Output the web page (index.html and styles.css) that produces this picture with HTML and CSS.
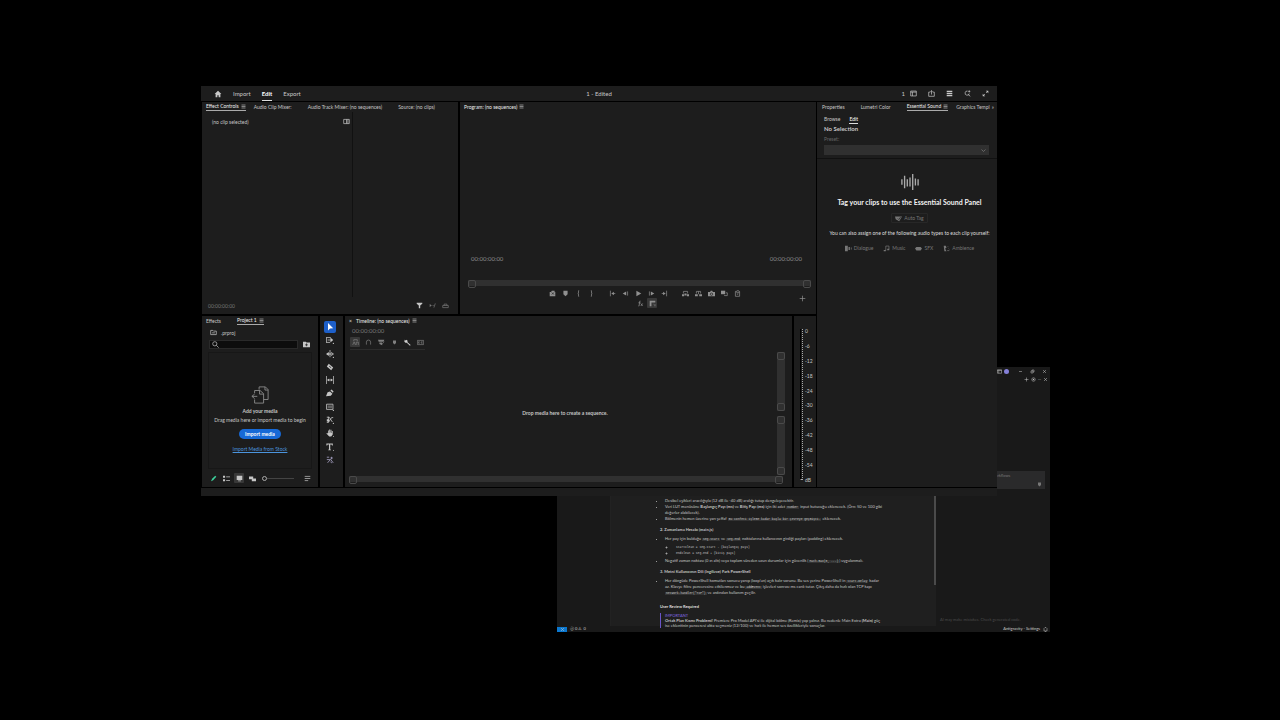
FILE: index.html
```html
<!DOCTYPE html>
<html lang="en">
<head>
  <meta charset="UTF-8">
  <title>1 - Edited</title>
  <link rel="stylesheet" href="styles.css">
</head>
<body>

  <!-- icon set, all on a 10x10 grid -->
  <svg class="sprite" aria-hidden="true">
    <symbol id="home" viewBox="0 0 10 10"><path d="M5 1L.8 5H2v4h2.200V6.500h1.600V9H8V5h1.200z"/></symbol>
    <symbol id="menu" viewBox="0 0 10 10"><path class="line" d="M1 2h8M1 5h8M1 8h8"/></symbol>
    <symbol id="workspace" viewBox="0 0 10 10"><path class="line" d="M1 1.500h8v7H1zM1 3h8M3.500 3v5.500"/></symbol>
    <symbol id="share" viewBox="0 0 10 10"><path class="line" d="M3 3H1v6h8V3H7M5 6.500V1M3.300 2.600L5 1l1.700 1.600"/></symbol>
    <symbol id="bars" viewBox="0 0 10 10"><path d="M1 1h8v2H1zM1 4h8v2H1zM1 7h8v2H1z"/></symbol>
    <symbol id="search-plus" viewBox="0 0 10 10"><path class="line" d="M7.500 5A3 3 0 1 1 5 1.500M6 6.500L9 9M7.500.5v3M6 2h3"/></symbol>
    <symbol id="expand" viewBox="0 0 10 10"><path class="line" d="M1.500 8.500l2.700-2.700M8.500 1.500L5.800 4.200"/><path d="M5.500 1H9v3.500zM1 5.500V9h3.500z"/></symbol>
    <symbol id="columns" viewBox="0 0 10 10"><path class="line" d="M1 2h8v6H1zM5 2v6M7 2v6"/></symbol>
    <symbol id="filter" viewBox="0 0 10 10"><path d="M1 1h8v1.500L6 5v4H4V5L1 2.500z"/></symbol>
    <symbol id="play-fx" viewBox="0 0 10 10"><path d="M1 3l3 2-3 2zM5 4.500h2v1H5z"/><path class="line" d="M9 2L7 8"/></symbol>
    <symbol id="export-frame" viewBox="0 0 10 10"><path class="line" d="M1 5v3h8V5M3 5V3h4v2M1 5h8"/></symbol>
    <symbol id="frame-add" viewBox="0 0 10 10"><path d="M1 3h2l1-2h4v2h1v6H1z"/><path class="cut" d="M4 3.500l3 3M7 3.500l-3 3"/></symbol>
    <symbol id="marker" viewBox="0 0 10 10"><path d="M2 1h6v5L5 9 2 6z"/></symbol>
    <symbol id="mark-in" viewBox="0 0 10 10"><path class="line" d="M6 1H5v3.500L4 5l1 .5V9h1"/></symbol>
    <symbol id="mark-out" viewBox="0 0 10 10"><path class="line" d="M4 1h1v3.500L6 5l-1 .5V9H4"/></symbol>
    <symbol id="go-in" viewBox="0 0 10 10"><path class="line" d="M2 1v8M4 5h5"/><path d="M7 2.500V7.500L3.500 5z"/></symbol>
    <symbol id="step-back" viewBox="0 0 10 10"><path d="M6 2v6L1 5z"/><path class="line" d="M8 2v6"/></symbol>
    <symbol id="play" viewBox="0 0 10 10"><path d="M2 1l7 4-7 4z"/></symbol>
    <symbol id="step-on" viewBox="0 0 10 10"><path class="line" d="M2 2v6"/><path d="M4 2v6l5-3z"/></symbol>
    <symbol id="go-out" viewBox="0 0 10 10"><path class="line" d="M8 1v8M1 5h5"/><path d="M3 2.500v5L6.500 5z"/></symbol>
    <symbol id="lift" viewBox="0 0 10 10"><path d="M0 6h3v3H0zM7 6h3v3H7zM3.500 5h3v3h-3z"/><path class="line" d="M2 5V2h6v3"/></symbol>
    <symbol id="extract" viewBox="0 0 10 10"><path d="M0 6h4v3H0zM6 6h4v3H6z"/><path class="line" d="M2 5V2h6v3M5 2v4"/></symbol>
    <symbol id="camera" viewBox="0 0 10 10"><path d="M0 3h3l1-2h2l1 2h3v6H0z"/><circle class="cut" cx="5" cy="6" r="1.700"/></symbol>
    <symbol id="compare" viewBox="0 0 10 10"><path d="M0 1h6v5H0z"/><path class="line" d="M7 4h2v4H5V7"/></symbol>
    <symbol id="proxy" viewBox="0 0 10 10"><path class="line" d="M2 2h2v2h3V2h1v7H2zM4 6h2M4 1h3"/></symbol>
    <symbol id="plus" viewBox="0 0 10 10"><path class="line" d="M5 1v8M1 5h8"/></symbol>
    <symbol id="fx" viewBox="0 0 10 10"><path class="line" d="M5 1.500H4L3 8.500H2M2 4h3M5.500 5L8 8.500M8 5L5.500 8.500"/></symbol>
    <symbol id="rulers" viewBox="0 0 10 10"><path d="M1 1h8v2.500H3.500V9H1z"/><path class="line" d="M6 6h.5M8.500 6v3"/></symbol>
    <symbol id="wave" viewBox="0 0 20 20"><path class="bar" d="M1 7v6M4 3v14M7 7v8M10 5v10M13 1v18M16 6v8M19 7v7"/></symbol>
    <symbol id="tag" viewBox="0 0 10 10"><path d="M0 2h6l4 0-4 7L1 6z"/><path class="cut" d="M4 5l1.500 1.500L8 3"/></symbol>
    <symbol id="speech" viewBox="0 0 10 10"><path d="M0 1h4v8H0zM5 3h2v4H5z"/><path class="line" d="M9 3.500v3"/></symbol>
    <symbol id="note" viewBox="0 0 10 10"><path class="line" d="M4 8V1.500h4.500V6"/><path d="M1 7h3v2H1zM6 5.500h3v2H6z"/></symbol>
    <symbol id="sfx" viewBox="0 0 10 10"><path d="M0 5l2-2h6l2 2-2 3H2z"/></symbol>
    <symbol id="ambience" viewBox="0 0 10 10"><path d="M1 1h3l1 3-2 1 2 4H2z"/><path class="line" d="M7 2v1M8 5l1 1M6 8h3"/></symbol>
    <symbol id="bin" viewBox="0 0 10 10"><path class="line" d="M1 2h3l1 1h4v5H1zM3 5.500h4"/></symbol>
    <symbol id="find" viewBox="0 0 10 10"><circle class="line" cx="4" cy="4" r="3"/><path class="line" d="M6.200 6.200L9.500 9.500"/></symbol>
    <symbol id="find-bin" viewBox="0 0 10 10"><path d="M0 1h4l1 1h5v7H0z"/><path class="cut" d="M5 3.500v4M3 5.500h4"/></symbol>
    <symbol id="media" viewBox="0 0 20 20"><path class="line" d="M9 4V1h7l3 3v11h-5M15.500 1v3.500H19M4 8V5h6l4 3.500V19H4v-4M9.500 5v4H14M1 11.500h6M4 9l-3 2.500L4 14"/></symbol>
    <symbol id="pen-green" viewBox="0 0 10 10"><path d="M1.500 9L3 5.500 7.500 1 9 2.500 4.500 7.500z"/></symbol>
    <symbol id="list" viewBox="0 0 10 10"><path d="M0 1h3v3H0zM0 6h3v3H0zM4.500 2H10v1.200H4.500zM4.500 7H10v1.200H4.500z"/></symbol>
    <symbol id="thumb" viewBox="0 0 10 10"><path d="M1 1h8v6H1zM3 8h4v1H3z"/></symbol>
    <symbol id="freeform" viewBox="0 0 10 10"><path d="M0 2h6v4H0zM4 5h6v4H4z"/></symbol>
    <symbol id="sort" viewBox="0 0 10 10"><path class="line" d="M1 2h8M1 5h8M1 8h5"/></symbol>
    <symbol id="pointer" viewBox="0 0 10 10"><path d="M2.500 0v9.500L5 7l4-.3z"/></symbol>
    <symbol id="track" viewBox="0 0 10 10"><path class="line" d="M0 2h6M0 8h5M.5 2v6M2 5h4"/><path d="M5.500 2L9 5 5.500 8zM8 10h2V8z"/></symbol>
    <symbol id="ripple" viewBox="0 0 10 10"><path class="line" d="M5 0v9"/><path d="M0 5l3.500-2.500v5zM10 5L6.500 2.500v5zM2 4.300h6v1.400H2zM8 10h2V8z"/></symbol>
    <symbol id="razor" viewBox="0 0 10 10"><path d="M3.500 1L9 5.500 6.500 9 1 4.500z"/><path class="cut" d="M4 4l2.500 2"/></symbol>
    <symbol id="slip" viewBox="0 0 10 10"><path class="line" d="M.5 0v10M9.500 0v10M2 5h6"/><path d="M1.500 5L4 3v4zM8.500 5L6 3v4z"/></symbol>
    <symbol id="pen" viewBox="0 0 10 10"><path d="M0 9l2-5 3-1 3 3-2 2.500zM5.500 2L7 .500 9.500 3 8.500 4.800z"/></symbol>
    <symbol id="rect" viewBox="0 0 10 10"><path class="line" d="M.7 1.500h8v6.500h-8z"/><path d="M2 3h5.500v3.500H2z" opacity=".4"/><path d="M8 10h2V8z"/></symbol>
    <symbol id="remix" viewBox="0 0 10 10"><path class="line" d="M1 1.500h3l4 6M1 8h2l4-6h2M3 1v7"/><path d="M8 10h2V8zM1 4h3v3H1z"/></symbol>
    <symbol id="hand" viewBox="0 0 10 10"><path d="M2.500 2h1v3h.5V.7h1.200V4.500h.5V1h1.100v4h.5V2.500h1.100V7L6.500 9.500H4L.5 5.500l1-.7 1 1z"/><path d="M8.500 10H10V8.500z"/></symbol>
    <symbol id="type" viewBox="0 0 10 10"><path d="M.5.500h8V3h-1l-.5-1H5.300v6l1 .5v.7H2.700v-.7l1-.5V2H2l-.5 1h-1zM8.500 10H10V8.500z"/></symbol>
    <symbol id="sparkle" viewBox="0 0 10 10"><path class="line" d="M1 1.500h3M7 1v3M5.500 2.500h3M1 4.500h5l3 4M2 8.500L5 5M6 7l1 2"/></symbol>
    <symbol id="nest" viewBox="0 0 10 10"><path class="line" d="M1 8.500L3 4l2 4.500M6 8.500V4.500h3v4M2.500 3V1h5v2"/></symbol>
    <symbol id="snap" viewBox="0 0 10 10"><path class="line" d="M2 8V4.500a3 3 0 0 1 6 0V8"/></symbol>
    <symbol id="linked" viewBox="0 0 10 10"><path d="M0 1h9L8 4H1zM2 5h4v4L2 7z"/><path class="line" d="M6 7l3-3"/></symbol>
    <symbol id="wrench" viewBox="0 0 10 10"><path d="M1 1l1.500 1.200L4 1l1 1.500v2L9.500 8.500l-1 1.200L4 5.500H2.200L.5 4z"/></symbol>
    <symbol id="captions" viewBox="0 0 10 10"><path class="line" d="M.5 2h9v6h-9zM4 4H2v2h2M8 4H6v2h2"/></symbol>
    <symbol id="gear" viewBox="0 0 10 10"><circle class="line" cx="5" cy="5" r="3.500"/><circle cx="5" cy="5" r="1.500"/></symbol>
    <symbol id="cross" viewBox="0 0 10 10"><path class="line" d="M2 2l6 6M8 2L2 8"/></symbol>
    <symbol id="restore" viewBox="0 0 10 10"><path class="line" d="M2 4h4v4H2zM4 4V2h4v4H6"/></symbol>
    <symbol id="minus" viewBox="0 0 10 10"><path class="line" d="M2 5h6"/></symbol>
    <symbol id="remote" viewBox="0 0 10 10"><path class="line" d="M2 2l3 3-3 3M8 2L5 5l3 3"/></symbol>
    <symbol id="bell" viewBox="0 0 10 10"><path class="line" d="M2 8V3l2-2h2l2 2v5zM4 9h2"/></symbol>
  </svg>

  <div class="desktop">

    <!-- code editor, behind -->
    <section class="window code-window">
      <header class="code-title">
        <svg class="icon tiny"><use href="#workspace"/></svg>
        <span class="avatar"></span>
        <span class="window-buttons">
          <button aria-label="Minimize"><svg class="icon tiny"><use href="#minus"/></svg></button>
          <button aria-label="Restore"><svg class="icon tiny"><use href="#restore"/></svg></button>
          <button aria-label="Close"><svg class="icon tiny"><use href="#cross"/></svg></button>
        </span>
      </header>
      <div class="code-body">
        <aside class="explorer"></aside>
        <main class="doc">
          <article>
            <ul>
              <li>Desibel eşikleri aracılığıyla (12 dB ile -40 dB) aralığı tutup dengeleyecektir.</li>
              <li>Veri LUT menüsüne <b>Başlangıç Payı (ms)</b> ve <b>Bitiş Payı (ms)</b> için iki adet <code>number</code> input kutucuğu eklenecek. (Örn: 50 ve 100 gibi değerler alabilecek).</li>
              <li>Bölmenin hemen üzerine yarı şeffaf <code>Bu confeti işleme kadar başla bir çevreye geçmişti.</code> eklenecek.</li>
            </ul>
            <h3>2. Zamanlama Hesabı (main.js)</h3>
            <ul>
              <li>Her pay için bulduğu <code>seg.start</code> ve <code>seg.end</code> noktalarına kullanıcının girdiği payları (padding) eklenecek.
                <ul>
                  <li><code>startClean = seg.start - (başlangıç payı)</code></li>
                  <li><code>endClean = seg.end + (bitiş payı)</code></li>
                </ul>
              </li>
              <li>Negatif zaman noktası (0 ın altı) veya toplam süreden uzun durumlar için güvenlik (<code>Math.max(0, ...)</code>) uygulanmalı.</li>
            </ul>
            <h3>3. Metni Kullanıcının Dili (Ingilizce) Fark PowerShell</h3>
            <ul>
              <li>Her döngüde PowerShell komutları sonucu yanıp (loop'un) açık kalır sorunu. Bu ses yerine PowerShell in <code>Start-Delay</code> kadar az. Klavye filtre penceresine etkilenmez ve bu <code>addEvent</code> işlevleri sonrası ms canlı tutar. Çıkış daha da hızlı olan TCP kapı <code>network.handler("TCP")</code> ve ardından kullanım geçilir.</li>
            </ul>
            <h2>User Review Required</h2>
            <blockquote>
              <span class="important">IMPORTANT</span>
              <b>Ortak Plan Kısmı Problemi!</b> Premiere Pro Model API'si ile dijital bölme (Remix) yap yalnız. Bu nedenle Main Extra <b>(Main)</b> güç ise eklentinin penceresi altta seçmeniz (12/100) ve hızlı ile hemen ses özellikleriyle sonuçlar.
            </blockquote>
          </article>
          <span class="doc-scroll"></span>
        </main>
        <aside class="agent">
          <div class="agent-bar">
            <svg class="icon tiny"><use href="#plus"/></svg>
            <svg class="icon tiny"><use href="#gear"/></svg>
            <span>···</span>
            <svg class="icon tiny"><use href="#cross"/></svg>
          </div>
          <div class="agent-card"><span>workflows</span><svg class="icon tiny"><use href="#marker"/></svg></div>
          <p class="agent-note">AI may make mistakes. Check generated code.</p>
        </aside>
      </div>
      <footer class="code-status">
        <span class="remote"><svg class="icon tiny"><use href="#remote"/></svg></span>
        <span>ⓧ 0 ⚠ 0</span>
        <span class="status-right">Antigravity - Settings</span>
        <svg class="icon tiny"><use href="#bell"/></svg>
      </footer>
    </section>

    <!-- video editor, in front -->
    <section class="window editor">
      <header class="topbar">
        <nav>
          <a href="#" aria-label="Home"><svg class="icon large"><use href="#home"/></svg></a>
          <a href="#">Import</a>
          <a href="#" class="current">Edit</a>
          <a href="#">Export</a>
        </nav>
        <h1>1 - Edited</h1>
        <div class="top-actions">
          <span>1</span>
          <button aria-label="Workspaces"><svg class="icon"><use href="#workspace"/></svg></button>
          <button aria-label="Quick export"><svg class="icon"><use href="#share"/></svg></button>
          <button aria-label="Progress"><svg class="icon"><use href="#bars"/></svg></button>
          <button aria-label="Search"><svg class="icon"><use href="#search-plus"/></svg></button>
          <button aria-label="Full screen"><svg class="icon"><use href="#expand"/></svg></button>
        </div>
      </header>

      <div class="workspace">
        <div class="left">
          <div class="row upper">

            <section class="panel effects">
              <nav class="tabs">
                <a href="#" class="active">Effect Controls <svg class="icon tiny"><use href="#menu"/></svg></a>
                <a href="#">Audio Clip Mixer:</a>
                <a href="#">Audio Track Mixer: (no sequences)</a>
                <a href="#">Source: (no clips)</a>
              </nav>
              <div class="effects-body">
                <div class="effects-list"><span>(no clip selected)</span><svg class="icon"><use href="#columns"/></svg></div>
                <div class="effects-time"></div>
              </div>
              <div class="effects-foot">
                <span class="dim">00:00:00:00</span>
                <button aria-label="Filter"><svg class="icon"><use href="#filter"/></svg></button>
                <button aria-label="Play audio" class="dim"><svg class="icon"><use href="#play-fx"/></svg></button>
                <button aria-label="Export" class="dim"><svg class="icon"><use href="#export-frame"/></svg></button>
              </div>
            </section>

            <section class="panel program">
              <nav class="tabs">
                <a href="#" class="plain">Program: (no sequences) <svg class="icon tiny"><use href="#menu"/></svg></a>
              </nav>
              <div class="monitor"></div>
              <div class="timecodes"><span>00:00:00:00</span><span>00:00:00:00</span></div>
              <div class="zoombar"></div>
              <div class="transport">
                <div class="group end">
                  <button aria-label="Add frame"><svg class="icon"><use href="#frame-add"/></svg></button>
                  <button aria-label="Add marker"><svg class="icon"><use href="#marker"/></svg></button>
                  <button aria-label="Mark in"><svg class="icon"><use href="#mark-in"/></svg></button>
                  <button aria-label="Mark out"><svg class="icon"><use href="#mark-out"/></svg></button>
                </div>
                <div class="group">
                  <button aria-label="Go to in"><svg class="icon"><use href="#go-in"/></svg></button>
                  <button aria-label="Step back"><svg class="icon"><use href="#step-back"/></svg></button>
                  <button aria-label="Play"><svg class="icon"><use href="#play"/></svg></button>
                  <button aria-label="Step forward"><svg class="icon"><use href="#step-on"/></svg></button>
                  <button aria-label="Go to out"><svg class="icon"><use href="#go-out"/></svg></button>
                </div>
                <div class="group">
                  <button aria-label="Lift"><svg class="icon"><use href="#lift"/></svg></button>
                  <button aria-label="Extract"><svg class="icon"><use href="#extract"/></svg></button>
                  <button aria-label="Export frame"><svg class="icon"><use href="#camera"/></svg></button>
                  <button aria-label="Comparison view"><svg class="icon"><use href="#compare"/></svg></button>
                  <button aria-label="Toggle proxies"><svg class="icon"><use href="#proxy"/></svg></button>
                </div>
              </div>
              <div class="transport second">
                <span></span>
                <div class="group">
                  <button aria-label="Effects"><svg class="icon"><use href="#fx"/></svg></button>
                  <button aria-label="Rulers" class="on"><svg class="icon"><use href="#rulers"/></svg></button>
                </div>
                <button class="add" aria-label="Button editor"><svg class="icon"><use href="#plus"/></svg></button>
              </div>
            </section>
          </div>

          <div class="row lower">
            <section class="panel project">
              <nav class="tabs">
                <a href="#">Effects</a>
                <a href="#" class="active">Project 1 <svg class="icon tiny"><use href="#menu"/></svg></a>
              </nav>
              <div class="project-file"><svg class="icon"><use href="#bin"/></svg><span>.prproj</span></div>
              <div class="search">
                <label><svg class="icon"><use href="#find"/></svg><input type="text" aria-label="Search project"></label>
                <button aria-label="New search bin"><svg class="icon"><use href="#find-bin"/></svg></button>
              </div>
              <div class="dropzone">
                <svg class="media-icon"><use href="#media"/></svg>
                <h2>Add your media</h2>
                <p>Drag media here or import media to begin</p>
                <button class="primary">Import media</button>
                <a href="#">Import Media from Stock</a>
              </div>
              <div class="project-foot">
                <button aria-label="Writable" class="green"><svg class="icon"><use href="#pen-green"/></svg></button>
                <button aria-label="List view"><svg class="icon"><use href="#list"/></svg></button>
                <button aria-label="Icon view" class="on"><svg class="icon"><use href="#thumb"/></svg></button>
                <button aria-label="Freeform view"><svg class="icon"><use href="#freeform"/></svg></button>
                <input type="range" value="0" aria-label="Zoom">
                <button aria-label="Sort"><svg class="icon"><use href="#sort"/></svg></button>
              </div>
            </section>

            <section class="panel tools">
              <button aria-label="Selection" class="selected"><svg class="icon large"><use href="#pointer"/></svg></button>
              <button aria-label="Track select"><svg class="icon large"><use href="#track"/></svg></button>
              <button aria-label="Ripple edit"><svg class="icon large"><use href="#ripple"/></svg></button>
              <button aria-label="Razor"><svg class="icon large"><use href="#razor"/></svg></button>
              <button aria-label="Slip"><svg class="icon large"><use href="#slip"/></svg></button>
              <button aria-label="Pen"><svg class="icon large"><use href="#pen"/></svg></button>
              <button aria-label="Rectangle"><svg class="icon large"><use href="#rect"/></svg></button>
              <button aria-label="Remix"><svg class="icon large"><use href="#remix"/></svg></button>
              <button aria-label="Hand"><svg class="icon large"><use href="#hand"/></svg></button>
              <button aria-label="Type"><svg class="icon large"><use href="#type"/></svg></button>
              <button aria-label="Generate" class="generate"><svg class="icon large"><use href="#sparkle"/></svg></button>
            </section>

            <section class="panel timeline">
              <nav class="tabs">
                <a href="#" class="plain"><span class="close">×</span>Timeline: (no sequences) <svg class="icon tiny"><use href="#menu"/></svg></a>
              </nav>
              <div class="timeline-code">00:00:00:00</div>
              <div class="timeline-tools">
                <button aria-label="Nest" class="on"><svg class="icon"><use href="#nest"/></svg></button>
                <button aria-label="Snap"><svg class="icon"><use href="#snap"/></svg></button>
                <button aria-label="Linked selection"><svg class="icon"><use href="#linked"/></svg></button>
                <button aria-label="Marker"><svg class="icon tiny"><use href="#marker"/></svg></button>
                <button aria-label="Settings" class="bright"><svg class="icon"><use href="#wrench"/></svg></button>
                <button aria-label="Captions"><svg class="icon"><use href="#captions"/></svg></button>
              </div>
              <div class="tracks">
                <p>Drop media here to create a sequence.</p>
                <div class="vbars"><span class="vbar"></span><span class="vbar"></span></div>
              </div>
              <div class="zoombar"></div>
            </section>

            <section class="panel meters">
              <span class="scale"></span>
              <ol>
                <li>0</li><li>-6</li><li>-12</li><li>-18</li><li>-24</li><li>-30</li>
                <li>-36</li><li>-42</li><li>-48</li><li>-54</li><li>dB</li>
              </ol>
            </section>
          </div>
        </div>

        <section class="panel sound">
          <nav class="tabs">
            <a href="#">Properties</a>
            <a href="#">Lumetri Color</a>
            <a href="#" class="active">Essential Sound <svg class="icon tiny"><use href="#menu"/></svg></a>
            <a href="#" class="last">Graphics Templ</a>
            <button aria-label="More tabs">»</button>
          </nav>
          <div class="sound-head">
            <nav class="subtabs"><a href="#">Browse</a><a href="#" class="active">Edit</a></nav>
            <h2>No Selection</h2>
            <label for="preset">Preset:</label>
            <select id="preset"><option></option></select>
          </div>
          <div class="sound-body">
            <svg class="wave-icon"><use href="#wave"/></svg>
            <h2>Tag your clips to use the Essential Sound Panel</h2>
            <button class="auto"><svg class="icon"><use href="#tag"/></svg>Auto Tag</button>
            <p>You can also assign one of the following audio types to each clip yourself:</p>
            <div class="types">
              <button><svg class="icon"><use href="#speech"/></svg>Dialogue</button>
              <button><svg class="icon"><use href="#note"/></svg>Music</button>
              <button><svg class="icon"><use href="#sfx"/></svg>SFX</button>
              <button><svg class="icon"><use href="#ambience"/></svg>Ambience</button>
            </div>
          </div>
        </section>
      </div>
      <footer class="statusbar"></footer>
    </section>
  </div>

</body>
</html>
```
FILE: styles.css
```css
* {
  box-sizing: border-box;
}

body {
  margin: 0;
  background: #000;
  color: #c6c6c6;
  font: 5px/8px Lato, "Noto Sans", sans-serif;
}

h1, h2, h3, p, ul, ol, blockquote {
  margin: 0;
  padding: 0;
  font-size: inherit;
}

a {
  color: inherit;
  text-decoration: none;
}

button {
  display: flex;
  align-items: center;
  justify-content: center;
  margin: 0;
  padding: 0;
  border: 0;
  background: none;
  color: inherit;
  font: inherit;
}

.sprite {
  display: none;
}

.icon {
  width: 7px;
  height: 7px;
  flex: none;
  fill: currentColor;
}

.icon.tiny {
  width: 5px;
  height: 5px;
}

.icon.large {
  width: 8px;
  height: 8px;
}

.line {
  fill: none;
  stroke: currentColor;
}

.bar {
  fill: none;
  stroke: currentColor;
  stroke-width: 1.5;
}

.cut {
  fill: none;
  stroke: #1d1d1d;
}

.dim {
  color: #777;
}

/* windows */
.desktop {
  position: relative;
  height: 100vh;
  overflow: hidden;
}

.window {
  position: absolute;
  display: flex;
  flex-direction: column;
  overflow: hidden;
}

.editor {
  inset: 86px 283px 224px 201px;
  background: #1d1d1d;
}

.code-window {
  inset: 367px 230px 88px 557px;
  background: #191919;
  font-size: 4px;
  line-height: 6px;
}

/* top bar */
.topbar {
  display: grid;
  grid-template-columns: 1fr auto 1fr;
  align-items: center;
  height: 15px;
  font-size: 6px;
  color: #c8c8c8;
}

.topbar nav {
  display: flex;
  align-items: center;
  gap: 11px;
  padding-left: 13px;
}

.topbar nav a {
  display: flex;
  align-items: center;
  height: 15px;
  border: solid transparent;
  border-width: 1px 0;
}

.topbar nav .current {
  color: #fff;
  font-weight: bold;
  border-bottom-color: #ddd;
}

.topbar h1 {
  font-weight: normal;
}

.top-actions {
  display: flex;
  align-items: center;
  justify-content: flex-end;
  gap: 11px;
  padding-right: 8px;
}

.top-actions span {
  margin-right: -6px;
}

/* panel layout */
.workspace {
  display: flex;
  flex: 1;
  gap: 1px;
  min-height: 0;
  padding: 1px 0 1px 1px;
  background: #000;
}

.left {
  display: flex;
  flex: 1;
  flex-direction: column;
  gap: 2px;
  min-width: 0;
}

.row {
  display: flex;
  gap: 2px;
  min-height: 0;
}

.upper {
  flex: 212;
}

.lower {
  flex: 171;
}

.panel {
  display: flex;
  flex-direction: column;
  min-width: 0;
  background: #1d1d1d;
}

.tabs {
  display: flex;
  gap: 8px;
  height: 10px;
  padding-left: 4px;
  white-space: nowrap;
}

.tabs a {
  display: flex;
  align-items: center;
  gap: 2px;
  height: 9px;
  padding-right: 8px;
}

.tabs .active,
.tabs .plain {
  padding-right: 0;
  color: #eee;
}

.tabs .active {
  border-bottom: 1px solid #aaa;
}

.on {
  background: #383838;
  border-radius: 1px;
}

/* effect controls */
.effects {
  flex: 256;
}

.effects-body {
  display: flex;
  flex: 1;
}

.effects-list {
  display: flex;
  flex: 0 0 59%;
  align-items: flex-start;
  justify-content: space-between;
  padding: 6px 2px 0 10px;
  border-right: 1px solid #111;
}

.effects-time {
  flex: 1;
  margin-left: 3px;
}

.effects-foot {
  display: flex;
  align-items: center;
  gap: 6px;
  height: 17px;
  padding: 0 9px 0 6px;
}

.effects-foot span {
  margin-right: auto;
}

/* program monitor */
.program {
  flex: 356;
}

.monitor {
  flex: 1;
}

.timecodes {
  display: flex;
  justify-content: space-between;
  padding: 0 14px 0 11px;
  margin-bottom: 17px;
  font-size: 6px;
  color: #8a8a8a;
}

.zoombar {
  display: flex;
  justify-content: space-between;
  height: 6px;
  margin: 0 5px 0 8px;
  background: #303030;
}

.zoombar::before,
.zoombar::after,
.vbar::before,
.vbar::after {
  content: "";
  width: 6px;
  height: 6px;
  border: 1px solid #4a4a4a;
  border-radius: 2px;
}

.transport {
  display: grid;
  grid-template-columns: 1fr auto 1fr;
  gap: 8px;
  height: 10px;
  margin-top: 2px;
  color: #909090;
}

.group {
  display: flex;
}

.group.end {
  justify-content: flex-end;
}

.group button {
  width: 13px;
  height: 10px;
}

.transport .on {
  width: 10px;
}

.second {
  margin: 0 10px 6px 25px;
}

.second .add {
  justify-content: flex-end;
  height: 1px;
}

/* project */
.project {
  flex: 116;
  overflow: hidden;
}

.project-file {
  display: flex;
  align-items: center;
  gap: 4px;
  height: 13px;
  padding-left: 8px;
}

.search {
  display: flex;
  align-items: center;
  gap: 5px;
  padding: 1px 8px 0 7px;
}

.search label {
  display: flex;
  flex: 1;
  align-items: center;
  height: 9px;
  padding-left: 2px;
  background: #0d0d0d;
  border: 1px solid #2a2a2a;
}

.search input {
  width: 100%;
  min-width: 0;
  height: 7px;
  padding: 0 2px;
  border: 0;
  background: none;
  color: inherit;
  font: inherit;
}

.dropzone {
  display: flex;
  flex: 1;
  flex-direction: column;
  align-items: center;
  justify-content: center;
  margin: 3px 6px 0;
  padding-top: 17px;
  border: 1px solid #171717;
  white-space: nowrap;
}

.media-icon {
  width: 18px;
  height: 18px;
  margin-bottom: 3px;
  color: #8a8a8a;
}

.dropzone p {
  margin: 1px 0 5px;
}

.primary {
  height: 10px;
  padding: 0 6px;
  border-radius: 5px;
  background: #1769d6;
  color: #fff;
  font-weight: bold;
}

.dropzone a {
  margin-top: 6px;
  color: #4b94dd;
  text-decoration: underline;
}

.project-foot {
  display: flex;
  align-items: center;
  gap: 3px;
  height: 18px;
  padding: 0 6px;
}

.project-foot button {
  width: 10px;
  height: 10px;
}

.green {
  color: #3ccf9b;
}

.project-foot input {
  flex: 1;
  min-width: 0;
  height: 5px;
  margin: 0 5px 0 2px;
  appearance: none;
  background: linear-gradient(#444, #444) center / 100% 1px no-repeat;
}

.project-foot input::-webkit-slider-thumb {
  width: 5px;
  height: 5px;
  appearance: none;
  border: 1px solid #aaa;
  border-radius: 50%;
  background: #1d1d1d;
}

/* tools */
.tools {
  flex: none;
  width: 23px;
  align-items: center;
  justify-content: space-between;
  padding: 5px 4px 21px 0;
}

.tools button {
  width: 12px;
  height: 12px;
  border-radius: 2px;
}

.tools .selected {
  background: #1d5fc9;
  color: #fff;
}

.tools .generate {
  color: #aaa5c8;
}

/* timeline */
.timeline {
  flex: 447;
}

.close {
  width: 5px;
}

.timeline-code {
  height: 10px;
  padding-left: 7px;
  font-size: 6px;
  line-height: 10px;
  color: #777;
}

.timeline-tools {
  display: flex;
  align-self: flex-start;
  gap: 3px;
  height: 14px;
  margin-left: 5px;
  padding-top: 1px;
  border-bottom: 1px solid #2c2c2c;
  color: #808080;
}

.timeline-tools button {
  width: 10px;
  height: 10px;
}

.timeline-tools .bright {
  color: #d0d0d0;
}

.tracks {
  display: flex;
  flex: 1;
  align-items: stretch;
  margin-right: 7px;
}

.tracks p {
  flex: 1;
  align-self: center;
  padding-left: 8px;
  text-align: center;
  font-weight: bold;
}

.vbars {
  display: flex;
  flex-direction: column;
  gap: 5px;
  padding: 2px 0 1px;
}

.vbar {
  display: flex;
  flex: 1;
  flex-direction: column;
  justify-content: space-between;
  background: #303030;
}

.timeline .zoombar {
  margin: 0 9px 5px 4px;
}

/* audio meters */
.meters {
  flex: none;
  flex-direction: row;
  gap: 2px;
  width: 22px;
  padding: 11px 0 3px 6px;
}

.scale {
  width: 3px;
  margin: 2px 0 4px;
  border-left: 1px solid #000;
  border-right: 1px dotted #aaa;
  border-bottom: 1px solid #aaa;
}

.meters ol {
  display: flex;
  flex-direction: column;
  justify-content: space-between;
  list-style: none;
}

/* essential sound */
.sound {
  flex: none;
  width: 180px;
}

.sound .tabs {
  padding-left: 5px;
}

.sound .tabs .last {
  padding: 0;
}

.sound .tabs button {
  margin-left: -6px;
}

.sound-head {
  padding: 3px 8px 3px 7px;
  border-bottom: 1px solid #111;
}

.subtabs {
  display: flex;
  gap: 9px;
}

.subtabs .active {
  border-bottom: 1px solid #ddd;
  color: #fff;
}

.sound-head h2 {
  margin: 1px 0;
  font-size: 6px;
  line-height: 8px;
}

.sound-head label {
  display: block;
  line-height: 11px;
  color: #666;
}

.sound-head select {
  display: block;
  width: 100%;
  height: 10px;
  padding: 0;
  border: 0;
  appearance: none;
  background: #303030 url("data:image/svg+xml,%3Csvg xmlns='http://www.w3.org/2000/svg' viewBox='0 0 10 10'%3E%3Cpath d='M1 3l4 4 4-4' fill='none' stroke='%23777' stroke-width='1.500'/%3E%3C/svg%3E") right 3px center / 5px no-repeat;
}

.sound-body {
  display: flex;
  flex-direction: column;
  align-items: center;
  padding: 14px 0 0 5px;
  white-space: nowrap;
}

.wave-icon {
  width: 18px;
  height: 18px;
  margin-bottom: 6px;
  color: #aaa;
}

.sound-body h2 {
  font-size: 7px;
  line-height: 11px;
  color: #f2f2f2;
}

.sound-body button {
  gap: 2px;
  height: 10px;
  padding: 0 3px;
  border-radius: 1px;
  color: #777;
}

.sound-body .auto {
  margin: 5px 0;
  border: 1px solid #272727;
}

.sound-body p {
  line-height: 10px;
  color: #ddd;
}

.types {
  display: flex;
  gap: 4px;
  margin-top: 5px;
}

.statusbar {
  height: 8px;
  background: #1d1d1d;
}

/* code window */
.code-title {
  display: flex;
  align-items: center;
  justify-content: flex-end;
  gap: 2px;
  height: 8px;
}

.avatar {
  width: 5px;
  height: 5px;
  border-radius: 50%;
  background: #8580d8;
}

.window-buttons {
  display: flex;
  gap: 7px;
  margin: 0 3px 0 7px;
}

.code-body {
  display: flex;
  flex: 1;
  min-height: 0;
}

.explorer {
  flex: 53;
  border-right: 1px solid #222;
}

.doc {
  display: flex;
  flex: 325;
  justify-content: flex-end;
  min-width: 0;
  background: #1f1f1f;
}

.doc article {
  width: 224px;
  margin-right: 50px;
  padding-top: 123px;
}

.doc ul {
  padding-left: 5px;
}

.doc ul ul {
  padding: 2px 0 2px 10px;
}

.doc h2,
.doc h3 {
  font-weight: bold;
  line-height: 6px;
}

.doc h2 {
  padding: 8px 0 3px;
  color: #ddd;
}

.doc h3 {
  padding: 5px 0 3px;
}

.doc code {
  padding: 0 1px;
  background: #333;
  font-family: "Liberation Mono", monospace;
  font-size: 3px;
  line-height: 4px;
}

.doc ul ul code {
  background: none;
}

.doc blockquote {
  padding-left: 4px;
  border-left: 1px solid #6a55c8;
  line-height: 5px;
}

.important {
  display: block;
  color: #8069e0;
}

.doc-scroll {
  flex: none;
  width: 2px;
  height: 210px;
  background: #4a4a4a;
}

.agent {
  display: flex;
  flex: 114;
  flex-direction: column;
}

.agent-bar {
  display: flex;
  align-items: center;
  justify-content: flex-end;
  gap: 2px;
  height: 9px;
  padding-right: 2px;
}

.agent-card {
  display: flex;
  align-items: flex-end;
  justify-content: space-between;
  height: 18px;
  margin: 87px 5px 0 0;
  padding: 2px 3px 2px 56px;
  background: #2a2a2b;
  color: #777;
}

.agent-card span {
  align-self: flex-start;
}

.agent-note {
  margin: auto 0 3px 4px;
  color: #4a4a4a;
}

.code-status {
  display: flex;
  align-items: center;
  gap: 3px;
  height: 6px;
  padding-right: 2px;
  color: #ccc;
}

.remote {
  display: flex;
  justify-content: center;
  width: 10px;
  background: #0b78d0;
}

.status-right {
  margin-left: auto;
}
```
